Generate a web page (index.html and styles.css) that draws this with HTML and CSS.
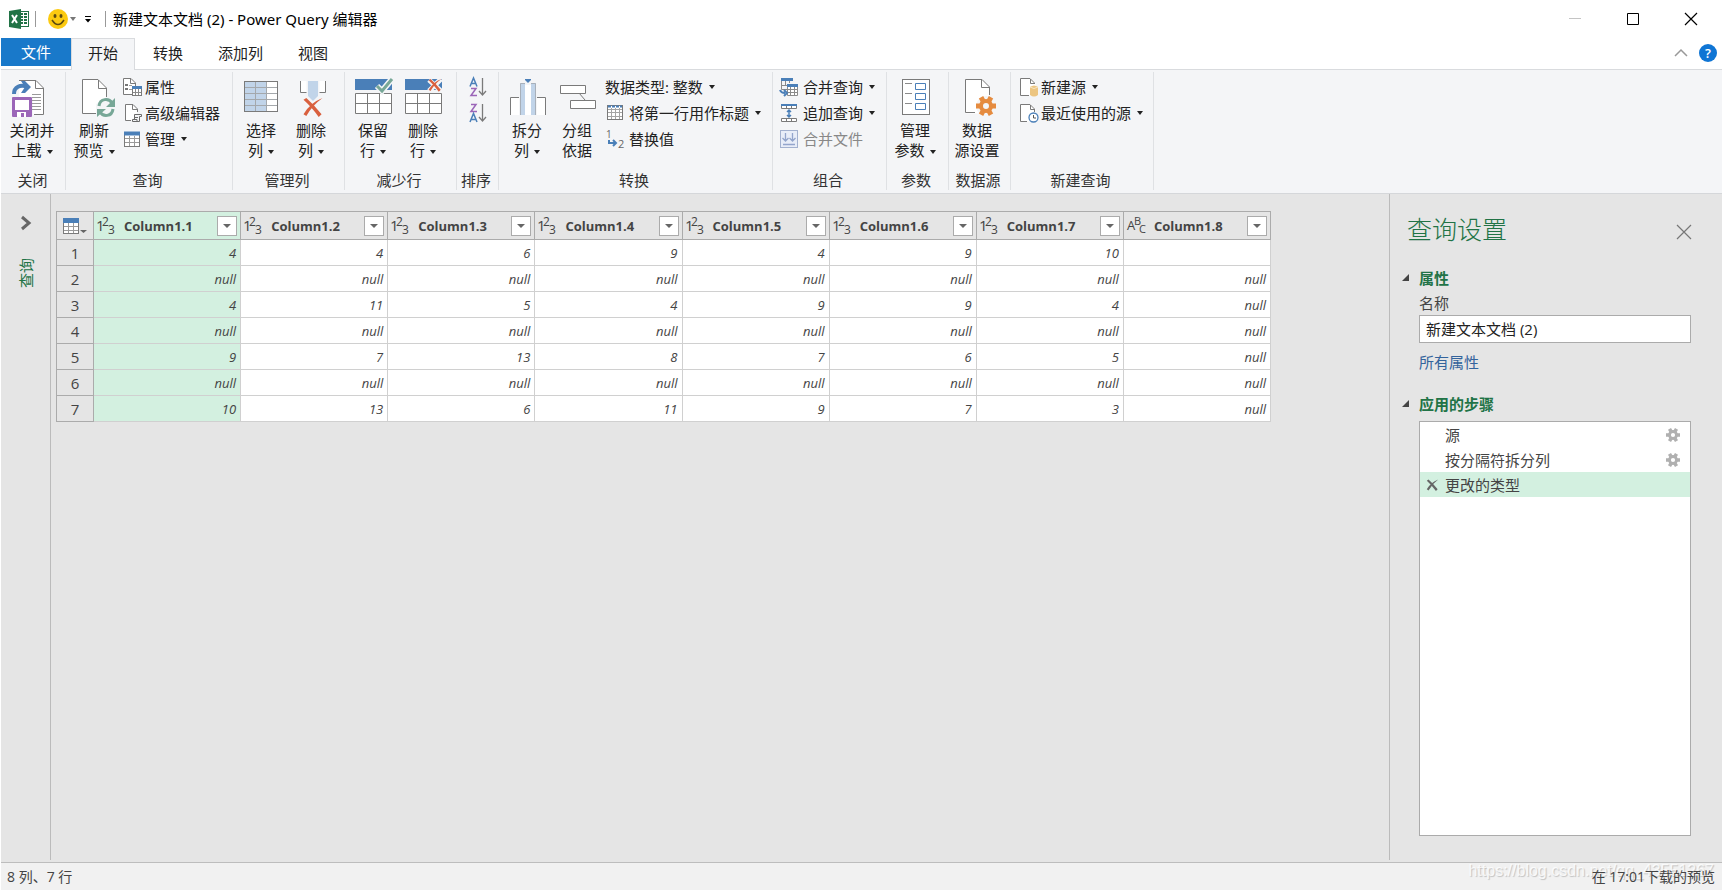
FILE: index.html
```html
<!DOCTYPE html>
<html lang="zh-CN">
<head>
<meta charset="utf-8">
<title>新建文本文档 (2) - Power Query 编辑器</title>
<link rel="stylesheet" href="styles.css">
</head>
<body>
<svg class="defs" aria-hidden="true">
  <symbol id="gear" viewBox="0 0 20 20">
    <circle cx="10" cy="10" r="5" fill="none" stroke="currentColor" stroke-width="4"/>
    <g fill="currentColor">
      <rect x="7.500" y="0" width="5" height="5" transform="rotate(30 10 10)"/>
      <rect x="7.500" y="0" width="5" height="5" transform="rotate(90 10 10)"/>
      <rect x="7.500" y="0" width="5" height="5" transform="rotate(150 10 10)"/>
      <rect x="7.500" y="0" width="5" height="5" transform="rotate(210 10 10)"/>
      <rect x="7.500" y="0" width="5" height="5" transform="rotate(270 10 10)"/>
      <rect x="7.500" y="0" width="5" height="5" transform="rotate(330 10 10)"/>
    </g>
  </symbol>
  <symbol id="cross" viewBox="0 0 22 21">
    <path d="M1 3L4 1Q12 8 20 18L17 21Q9 10 1 3Z"/>
    <path d="M21 1Q10 9 4 20L1 18Q8 6 21 1Z"/>
  </symbol>
  <symbol id="type-number" viewBox="0 0 20 20">
    <text x="-1" y="15" font-size="15">1</text>
    <text x="5" y="10" font-size="12">2</text>
    <text x="11" y="18" font-size="12">3</text>
  </symbol>
  <symbol id="type-text" viewBox="0 0 20 20">
    <text x="0" y="14" font-size="13">A</text>
    <text x="7" y="9" font-size="11">B</text>
    <text x="12" y="17" font-size="11">C</text>
  </symbol>
</svg>

<div class="app">
  <header class="titlebar">
    <svg class="excel" width="20" height="20" viewBox="0 0 20 20" aria-hidden="true">
      <rect x="10" y="2.500" width="9.500" height="15" fill="#fff" stroke="#217346"/>
      <path d="M12 5H14M15 5H18M12 8H14M15 8H18M12 11H14M15 11H18M12 14H14M15 14H18" stroke="#217346" stroke-width="2"/>
      <path d="M0 2L12 0V20L0 18Z" fill="#217346"/>
      <path d="M3 6L8 14M8 6L3 14" stroke="#fff" stroke-width="2"/>
    </svg>
    <span class="rule"></span>
    <button class="plain smile" aria-label="反馈">
      <svg width="20" height="20" viewBox="0 0 20 20"><circle cx="10" cy="10" r="10" fill="#fcca10"/><ellipse cx="7" cy="7" rx="1.500" ry="2" fill="#5c4a10"/><ellipse cx="13" cy="7" rx="1.500" ry="2" fill="#5c4a10"/><path d="M4 11Q10 20 16 11" fill="none" stroke="#5c4a10" stroke-width="1.500"/></svg>
      <span class="caret dim"></span>
    </button>
    <button class="plain qat" aria-label="自定义快速访问工具栏">
      <svg width="8" height="8" viewBox="0 0 8 8"><path d="M1 .5H7" stroke="#000"/><path d="M1 3H7L4 6.500Z"/></svg>
    </button>
    <span class="rule"></span>
    <h1>新建文本文档 (2) - Power Query 编辑器</h1>
    <div class="window-buttons">
      <button class="plain" aria-label="最小化"><svg width="14" height="14"><path d="M1 6.500H13" stroke="#c4c4c4"/></svg></button>
      <button class="plain" aria-label="最大化"><svg width="14" height="14"><path d="M1.500 1.500H12.500V12.500H1.500Z" fill="none" stroke="#000"/></svg></button>
      <button class="plain" aria-label="关闭"><svg width="14" height="14"><path d="M1 1L13 13M13 1L1 13" stroke="#000" stroke-width="1.200"/></svg></button>
    </div>
  </header>

  <nav class="tabs">
    <button class="tab file">文件</button>
    <button class="tab active">开始</button>
    <button class="tab">转换</button>
    <button class="tab">添加列</button>
    <button class="tab">视图</button>
    <div class="tab-tools">
      <button class="plain" aria-label="折叠功能区"><svg width="14" height="8" viewBox="0 0 14 8"><path d="M1 7L7 1L13 7" fill="none" stroke="#999" stroke-width="1.500"/></svg></button>
      <button class="help" aria-label="帮助">?</button>
    </div>
  </nav>

  <section class="ribbon" aria-label="功能区">
    <div class="group g-close">
      <div class="items">
        <button class="big">
          <svg width="40" height="40" viewBox="0 0 40 40"><path d="M7 2.500H24L31.500 10V36.500H21V20H7Z" fill="#fff"/><path d="M7 2.500H24L31.500 10V36.500H22M23.500 2.500V10.500H31" fill="none" stroke="#7a7a7a"/><path d="M20 16.500H29M20 19.500H29M20 22.500H29M20 25.500H29M20 28.500H29M20 31.500H29" stroke="#9a9a9a"/><path d="M2 16C2 9 8 6 16 9" fill="none" stroke="#4a7fb8" stroke-width="4"/><path d="M9 3H13L19 9L13 15H9L13 9Z" fill="#4a7fb8"/><rect y="19" width="20" height="20" rx="1" fill="#9b66b8"/><rect x="3" y="22" width="14" height="10" fill="#fff"/><rect x="5" y="34" width="9" height="5" fill="#fff"/><rect x="9" y="35" width="3" height="4" fill="#9b66b8"/></svg>
          <span>关闭并</span><span>上载<i class="caret"></i></span>
        </button>
      </div>
      <h2>关闭</h2>
    </div>

    <div class="group g-query">
      <div class="items">
        <button class="big wide">
          <svg width="40" height="40" viewBox="0 0 40 40"><path d="M8.500 1.500H24L32.500 10V19L22 26V35.500H8.500Z" fill="#fff"/><path d="M22 35.500H8.500V1.500H24L32.500 10V19M24.500 2V10.500H32" fill="none" stroke="#7a7a7a"/><g fill="none" stroke="#77a797" stroke-width="3"><path d="M25 28C26 20 35 20 38 25"/><path d="M39 31C38 39 29 39 26 34"/></g><path d="M41 20V29H32ZM23 39V31H32Z" fill="#77a797"/></svg>
          <span>刷新</span><span>预览<i class="caret"></i></span>
        </button>
        <div class="rows">
          <button class="small"><svg width="20" height="20" viewBox="0 0 20 20"><path d="M.5 1.500H8L12.500 6V17.500H.5Z" fill="#fff" stroke="#7a7a7a"/><path d="M7.500 2V6.500H12" fill="none" stroke="#7a7a7a"/><path d="M2 8H5M2 12H5" stroke="#777" stroke-width="2"/><path d="M6 8.500H9M6 12.500H9" stroke="#999"/><rect x="9.500" y="10.500" width="9" height="8" fill="#fff" stroke="#7a7a7a"/><path d="M9 10.500H19" stroke="#4a7fb8" stroke-width="3"/><path d="M10 15.500H18M12.500 12V18M15.500 12V18" stroke="#8a8a8a"/></svg>属性</button>
          <button class="small"><svg width="20" height="20" viewBox="0 0 20 20"><path d="M3 2H9L14 7V10L9 17H3Z" fill="#fff"/><path d="M8 17.500H2.500V1.500H10L14.500 6V9M9.500 2V6.500H14" fill="none" stroke="#7a7a7a"/><path d="M11.500 16V11.500H18.500V13.500H16.500V18.500H9.500V16.500H14V18" fill="#f4f5f7" stroke="#6a6a6a"/><path d="M12 14.500H15" stroke="#6a6a6a"/></svg>高级编辑器</button>
          <button class="small"><svg width="20" height="20" viewBox="0 0 20 20"><rect x="1.500" y="3.500" width="15" height="14" fill="#fff" stroke="#7a7a7a"/><path d="M1 4.500H17" stroke="#4a7fb8" stroke-width="4"/><path d="M2 9.500H16M2 13.500H16M6.500 7V17M11.500 7V17" stroke="#9a9a9a"/></svg>管理<i class="caret"></i></button>
        </div>
      </div>
      <h2>查询</h2>
    </div>

    <div class="group g-columns">
      <div class="items">
        <button class="big">
          <svg width="40" height="40" viewBox="0 0 40 40"><rect x="3.500" y="3.500" width="33" height="30" fill="#fff"/><rect x="4" y="4" width="22" height="29" fill="#c1d4e9"/><path d="M4 9.500H36M4 15.500H36M4 21.500H36M4 27.500H36M14.500 4V33M25.500 4V33" stroke="#a4a8ac"/><rect x="3.500" y="3.500" width="33" height="30" fill="none" stroke="#7a7a7a"/></svg>
          <span>选择</span><span>列<i class="caret"></i></span>
        </button>
        <button class="big">
          <svg width="40" height="40" viewBox="0 0 40 40"><path d="M9.500 3V14.500H15.500V3M28.500 3V14.500H34.500V3" fill="#fff"/><path d="M9.500 3V14.500H15.500M28.500 14.500H34.500V3" fill="none" stroke="#7a7a7a"/><path d="M17 3H27V18L22 23L17 18Z" fill="#c1d4e9"/><use href="#cross" x="11" y="19" width="22" height="20" fill="#d9603f"/></svg>
          <span>删除</span><span>列<i class="caret"></i></span>
        </button>
      </div>
      <h2>管理列</h2>
    </div>

    <div class="group g-rows">
      <div class="items">
        <button class="big">
          <svg width="40" height="40" viewBox="0 0 40 40"><rect x="2" y="1" width="37" height="11" fill="#4a7fb8"/><path d="M2.500 15.500H38.500V35.500H2.500ZM14.500 15V35M26.500 15V35M2 25.500H38" fill="#fff" stroke="#7a7a7a"/><path d="M24 8L29 13L39 1" fill="none" stroke="#f4f5f7" stroke-width="6"/><path d="M24 8L29 13L39 1" fill="none" stroke="#77a797" stroke-width="3"/></svg>
          <span>保留</span><span>行<i class="caret"></i></span>
        </button>
        <button class="big">
          <svg width="40" height="40" viewBox="0 0 40 40"><rect x="2" y="1" width="37" height="11" fill="#4a7fb8"/><path d="M2.500 15.500H38.500V35.500H2.500ZM14.500 15V35M26.500 15V35M2 25.500H38" fill="#fff" stroke="#7a7a7a"/><path d="M26 2L38 13M38 1L26 13" stroke="#f4f5f7" stroke-width="5"/><use href="#cross" x="25" y="0" width="14" height="14" fill="#d9603f"/></svg>
          <span>删除</span><span>行<i class="caret"></i></span>
        </button>
      </div>
      <h2>减少行</h2>
    </div>

    <div class="group g-sort">
      <div class="items sort">
        <button class="plain" aria-label="升序排序"><svg width="18" height="20" viewBox="0 0 18 20"><path d="M1 9.500L4.500 1L8 9.500M2 6.500H7" fill="none" stroke="#4a7fb8" stroke-width="1.500"/><path d="M2 11.500H7L2 18.500H8" fill="none" stroke="#9b66b8" stroke-width="1.500"/><path d="M13.500 1V18M10 14L13.500 18L17 14" fill="none" stroke="#7a7a7a" stroke-width="1.300"/></svg></button>
        <button class="plain" aria-label="降序排序"><svg width="18" height="20" viewBox="0 0 18 20"><path d="M2 1.500H7L2 8.500H8" fill="none" stroke="#9b66b8" stroke-width="1.500"/><path d="M1 19L4.500 10.500L8 19M2 16.500H7" fill="none" stroke="#4a7fb8" stroke-width="1.500"/><path d="M13.500 1V18M10 14L13.500 18L17 14" fill="none" stroke="#7a7a7a" stroke-width="1.300"/></svg></button>
      </div>
      <h2>排序</h2>
    </div>

    <div class="group g-transform">
      <div class="items">
        <button class="big">
          <svg width="40" height="40" viewBox="0 0 40 40"><path d="M3.500 37V19.500H12V37M30 37V19.500H38.500V37" fill="#fff"/><path d="M3.500 37V19.500H12M30 19.500H38.500V37" fill="none" stroke="#7a7a7a"/><path d="M18 7H24V37H18Z" fill="#fff"/><path d="M13 5H18V37H13ZM24 5H29V37H24Z" fill="#c1d4e9"/><path d="M13.500 37V5.500H18M24 5.500H28.500V37" fill="none" stroke="#a8b0ba"/><path d="M18 1H24V2L21 5L18 2Z" fill="#4a7fb8"/></svg>
          <span>拆分</span><span>列<i class="caret"></i></span>
        </button>
        <button class="big">
          <svg width="40" height="40" viewBox="0 0 40 40"><path d="M22 15L28 22" stroke="#7a7a7a"/><path d="M3.500 7.500H28.500V15.500H3.500ZM13.500 22.500H38.500V30.500H13.500Z" fill="#fff" stroke="#7a7a7a"/></svg>
          <span>分组</span><span>依据</span>
        </button>
        <div class="rows">
          <button class="small">数据类型: 整数<i class="caret"></i></button>
          <button class="small"><svg width="20" height="20" viewBox="0 0 20 20"><rect x="2.500" y="2.500" width="15" height="14" fill="#fff"/><path d="M2 6.500H18M2 9.500H18M2 13.500H18M6.500 5V17M10.500 5V17M14.500 5V17" stroke="#a4a4a4"/><rect x="2.500" y="2.500" width="15" height="14" fill="none" stroke="#7a7a7a"/><path d="M3 3.500H17" stroke="#4a7fb8" stroke-width="2" stroke-dasharray="3 1"/></svg>将第一行用作标题<i class="caret"></i></button>
          <button class="small"><svg width="20" height="20" viewBox="0 0 20 20"><text x="1" y="9" font-size="10" fill="#666">1</text><text x="13" y="19" font-size="11" fill="#666">2</text><path d="M4 11V14H10M8 11L11 14L8 17" fill="none" stroke="#4a7fb8" stroke-width="2"/></svg>替换值</button>
        </div>
      </div>
      <h2>转换</h2>
    </div>

    <div class="group g-combine">
      <div class="items">
        <div class="rows">
          <button class="small"><svg width="20" height="20" viewBox="0 0 20 20"><path d="M2.500 4V12.500H8M6.500 4V8M2 8.500H8M10.500 4V6" fill="none" stroke="#8a8a8a"/><path d="M2 1H14V4H2ZM8 7H19V10H8Z" fill="#4a7fb8"/><path d="M8.500 10V18.500H18.500V10M9 12.500H18M9 15.500H18M11.500 10V18M15.500 10V18" fill="#fff" stroke="#8a8a8a"/><path d="M1 13Q2 16 6 16M5 13L8 16L5 19" fill="none" stroke="#4a7fb8" stroke-width="2"/></svg>合并查询<i class="caret"></i></button>
          <button class="small"><svg width="20" height="20" viewBox="0 0 20 20"><path d="M2.500 3V5.500H17.500V3M7.500 3V5M12.500 3V5M2.500 15.500H17.500V18.500H2.500ZM7.500 15V18M12.500 15V18" fill="#fff" stroke="#7a7a7a"/><rect x="2" y="1" width="16" height="2" fill="#4a7fb8"/><path d="M10 7V14M8 9L10 7L12 9M8 12L10 14L12 12" fill="none" stroke="#4a7fb8" stroke-width="1.500"/></svg>追加查询<i class="caret"></i></button>
          <button class="small" disabled><svg width="20" height="20" viewBox="0 0 20 20"><rect x="1.500" y="1.500" width="17" height="17" fill="#e8edf8" stroke="#a3b1cf"/><path d="M6.500 4V11M3.500 9L6.500 12L9.500 9M13.500 4V11M10.500 9L13.500 12L16.500 9M4 15.500H16" fill="none" stroke="#93a5cc" stroke-width="1.300"/></svg>合并文件</button>
        </div>
      </div>
      <h2>组合</h2>
    </div>

    <div class="group g-params">
      <div class="items">
        <button class="big wide">
          <svg width="40" height="40" viewBox="0 0 40 40"><rect x="7.500" y="1.500" width="27" height="35" fill="#fff" stroke="#7a7a7a"/><path d="M10 5.500H17M10 15.500H17M10 25.500H17" stroke="#8a8a8a"/><path d="M20.500 5.500H30.500V11.500H20.500ZM20.500 15.500H30.500V21.500H20.500ZM20.500 25.500H30.500V31.500H20.500Z" fill="#fff" stroke="#4a7fb8"/></svg>
          <span>管理</span><span>参数<i class="caret"></i></span>
        </button>
      </div>
      <h2>参数</h2>
    </div>

    <div class="group g-source">
      <div class="items">
        <button class="big wide">
          <svg width="40" height="40" viewBox="0 0 40 40"><path d="M8.500 1.500H25L32.500 9V35.500H8.500Z" fill="#fff"/><path d="M18 34.500H8.500V1.500H25L32.500 9V17M24.500 2V9.500H32" fill="none" stroke="#7a7a7a"/><circle cx="29" cy="28" r="10" fill="#f4f5f7"/><g class="orange"><use href="#gear" x="19" y="18" width="20" height="20"/></g></svg>
          <span>数据</span><span>源设置</span>
        </button>
      </div>
      <h2>数据源</h2>
    </div>

    <div class="group g-new">
      <div class="items">
        <div class="rows">
          <button class="small"><svg width="20" height="20" viewBox="0 0 20 20"><path d="M1.500 1.500H12L16.500 6V18.500H1.500Z" fill="#fff"/><path d="M10 18.500H1.500V1.500H11L15.500 6V7M11.500 2V6.500H15" fill="none" stroke="#7a7a7a"/><path d="M11 10Q15 7 19 10V18Q15 21 11 18Z" fill="#ecc581"/><path d="M11 10Q15 13 19 10" fill="none" stroke="#f8e5c2"/></svg>新建源<i class="caret"></i></button>
          <button class="small"><svg width="20" height="20" viewBox="0 0 20 20"><path d="M1.500 1.500H12L16.500 6V18.500H1.500Z" fill="#fff"/><path d="M8 18.500H1.500V1.500H11L15.500 6V9M11.500 2V6.500H15" fill="none" stroke="#7a7a7a"/><circle cx="14.500" cy="14.500" r="4.500" fill="#fff" stroke="#4a7fb8" stroke-width="1.300"/><path d="M14.500 12V15H17" fill="none" stroke="#555"/></svg>最近使用的源<i class="caret"></i></button>
        </div>
      </div>
      <h2>新建查询</h2>
    </div>
  </section>

  <main class="workspace">
    <aside class="queries">
      <button class="plain" aria-label="展开"><svg width="10" height="14" viewBox="0 0 10 14"><path d="M1 1L8 7L1 13" fill="none" stroke="#666" stroke-width="3"/></svg></button>
      <span class="vertical">查询</span>
    </aside>

    <div class="grid-area">
      <table class="grid">
        <thead>
          <tr>
            <th class="corner"><button class="plain" aria-label="表选项"><svg width="24" height="16" viewBox="0 0 24 16"><rect x=".5" y="1.500" width="15" height="14" fill="#fff" stroke="#7a7a7a"/><rect y="0" width="16" height="5" fill="#4a7fb8"/><path d="M1 8.500H15M1 12.500H15M5.500 5V15M10.500 5V15" stroke="#9a9a9a"/><path d="M17 12H24L20.500 15Z" fill="#666"/></svg></button></th>
            <th class="sel"><div class="head"><svg class="type" width="20" height="20"><use href="#type-number"/></svg><span>Column1.1</span><button class="filter" aria-label="筛选 Column1.1"></button></div></th>
            <th><div class="head"><svg class="type" width="20" height="20"><use href="#type-number"/></svg><span>Column1.2</span><button class="filter" aria-label="筛选 Column1.2"></button></div></th>
            <th><div class="head"><svg class="type" width="20" height="20"><use href="#type-number"/></svg><span>Column1.3</span><button class="filter" aria-label="筛选 Column1.3"></button></div></th>
            <th><div class="head"><svg class="type" width="20" height="20"><use href="#type-number"/></svg><span>Column1.4</span><button class="filter" aria-label="筛选 Column1.4"></button></div></th>
            <th><div class="head"><svg class="type" width="20" height="20"><use href="#type-number"/></svg><span>Column1.5</span><button class="filter" aria-label="筛选 Column1.5"></button></div></th>
            <th><div class="head"><svg class="type" width="20" height="20"><use href="#type-number"/></svg><span>Column1.6</span><button class="filter" aria-label="筛选 Column1.6"></button></div></th>
            <th><div class="head"><svg class="type" width="20" height="20"><use href="#type-number"/></svg><span>Column1.7</span><button class="filter" aria-label="筛选 Column1.7"></button></div></th>
            <th><div class="head"><svg class="type" width="20" height="20"><use href="#type-text"/></svg><span>Column1.8</span><button class="filter" aria-label="筛选 Column1.8"></button></div></th>
          </tr>
        </thead>
        <tbody>
          <tr><th>1</th><td class="sel">4</td><td>4</td><td>6</td><td>9</td><td>4</td><td>9</td><td>10</td><td></td></tr>
          <tr><th>2</th><td class="sel">null</td><td>null</td><td>null</td><td>null</td><td>null</td><td>null</td><td>null</td><td>null</td></tr>
          <tr><th>3</th><td class="sel">4</td><td>11</td><td>5</td><td>4</td><td>9</td><td>9</td><td>4</td><td>null</td></tr>
          <tr><th>4</th><td class="sel">null</td><td>null</td><td>null</td><td>null</td><td>null</td><td>null</td><td>null</td><td>null</td></tr>
          <tr><th>5</th><td class="sel">9</td><td>7</td><td>13</td><td>8</td><td>7</td><td>6</td><td>5</td><td>null</td></tr>
          <tr><th>6</th><td class="sel">null</td><td>null</td><td>null</td><td>null</td><td>null</td><td>null</td><td>null</td><td>null</td></tr>
          <tr><th>7</th><td class="sel">10</td><td>13</td><td>6</td><td>11</td><td>9</td><td>7</td><td>3</td><td>null</td></tr>
        </tbody>
      </table>
    </div>

    <aside class="settings">
      <div class="settings-head">
        <h2>查询设置</h2>
        <button class="plain" aria-label="关闭查询设置"><svg width="14" height="14"><path d="M0 0L14 14M14 0L0 14" stroke="#777" stroke-width="1.200"/></svg></button>
      </div>
      <h3><svg width="8" height="8"><path d="M0 7H7V0Z" fill="#444"/></svg>属性</h3>
      <label for="query-name">名称</label>
      <input id="query-name" type="text" value="新建文本文档 (2)">
      <a href="#">所有属性</a>
      <h3 class="steps-title"><svg width="8" height="8"><path d="M0 7H7V0Z" fill="#444"/></svg>应用的步骤</h3>
      <ol class="steps">
        <li><span class="mark"></span><span>源</span><button class="plain" aria-label="编辑设置"><svg width="14" height="14"><use href="#gear"/></svg></button></li>
        <li><span class="mark"></span><span>按分隔符拆分列</span><button class="plain" aria-label="编辑设置"><svg width="14" height="14"><use href="#gear"/></svg></button></li>
        <li class="current"><span class="mark"><button class="plain" aria-label="删除步骤"><svg width="13" height="12" fill="#666"><use href="#cross"/></svg></button></span><span>更改的类型</span></li>
      </ol>
    </aside>
  </main>

  <footer class="status">
    <span>8 列、7 行</span>
    <span class="watermark">https://blog.csdn.net/qq_43551267</span>
    <span class="preview-time">在 17:01下载的预览</span>
  </footer>
</div>
</body>
</html>
```
FILE: styles.css
```css
* { box-sizing: border-box; }

body {
  margin: 0;
  background: #fff;
  color: #222;
  font: 15px/20px "Open Sans", "Noto Sans CJK SC", sans-serif;
}

h1, h2, h3, ol { margin: 0; padding: 0; font-weight: 400; font-size: 15px; }
button { font: inherit; color: inherit; background: none; border: 0; padding: 0; white-space: nowrap; }
svg { display: block; flex: none; overflow: visible; }
symbol { overflow: visible; }
.defs { position: absolute; width: 0; height: 0; }
.plain { display: flex; align-items: center; justify-content: center; }

.app { display: flex; flex-direction: column; min-height: 100vh; padding-left: 1px; }

.caret {
  display: inline-block;
  flex: none;
  margin-left: 5px;
  vertical-align: middle;
  border: 3px solid transparent;
  border-top: 4px solid #222;
  border-bottom: 0;
}
.caret.dim { border-top-color: #777; margin-left: 2px; }

/* Title bar */
.titlebar { display: flex; align-items: center; height: 38px; padding-left: 8px; }
.titlebar h1 { margin-left: 7px; font-family: "Noto Sans", "Noto Sans CJK SC", sans-serif; color: #000; }
.rule { width: 1px; height: 16px; background: #999; }
.excel { margin-right: 6px; }
.smile { margin-left: 12px; }
.qat { margin: 2px 13px 0 8px; }
.window-buttons { display: flex; margin-left: auto; padding-right: 2px; align-self: stretch; }
.window-buttons button { width: 58px; }

/* Tabs */
.tabs { display: flex; gap: 1px; height: 31px; }
.tab { padding: 0 17px 2px; height: 31px; color: #222; }
.tab.file { height: 28px; padding: 0 20px; margin-right: -1px; background: #1979ca; color: #fff; }
.tab.active {
  position: relative;
  height: 32px;
  padding: 0 16px 3px;
  background: #f4f5f7;
  border: 1px solid #d9dbde;
  border-bottom: 0;
}
.tab-tools { display: flex; align-items: center; gap: 11px; margin-left: auto; padding: 0 5px 2px 0; }
.help { width: 18px; height: 18px; border-radius: 50%; background: #0f75d4; color: #fff; font-size: 13px; line-height: 18px; font-weight: 600; }

/* Ribbon */
.ribbon {
  display: flex;
  padding: 2px 0 3px;
  background: #f4f5f7;
  border-top: 1px solid #d9dbde;
  border-bottom: 1px solid #d5d7da;
}
.group { display: flex; flex-direction: column; flex: none; padding-top: 2px; border-right: 1px solid #dfe1e4; }
.group h2 { padding-right: 3px; text-align: center; line-height: 20px; color: #333; }
.items { display: flex; height: 96px; }
.g-close { width: 65px; }
.g-query { width: 167px; }
.g-columns { width: 112px; }
.g-rows { width: 112px; }
.g-sort { width: 42px; }
.g-transform { width: 274px; }
.g-combine { width: 114px; }
.g-params { width: 62px; }
.g-source { width: 62px; }
.g-new { width: 143px; }
.g-close h2 { padding-right: 1px; }
.g-columns .items, .g-rows .items, .g-transform .items { padding-left: 3px; }
.g-combine .items { padding-left: 6px; }
.g-new .items { padding-left: 8px; }

.big { display: flex; flex-direction: column; align-items: center; width: 50px; padding-top: 4px; }
.big svg { margin-bottom: 2px; }
.wide { width: 56px; }
.g-query .rows { padding-left: 1px; }
.g-close .big { width: 62px; }

.rows { display: flex; flex-direction: column; align-items: flex-start; }
.small { display: flex; align-items: center; height: 26px; }
.small svg { margin-right: 2px; }
.g-transform .rows { padding-left: 3px; }
.g-transform .small svg { margin-right: 4px; }
.g-combine .small svg { margin-right: 4px; }
.small:disabled { color: #888; }
.small .caret { margin-left: 6px; }
.sort { flex-direction: column; align-items: center; gap: 6px; padding-top: 3px; }
.orange { color: #e58b3f; }

/* Workspace */
.workspace { display: flex; flex: 1; background: #e5e5e5; padding-bottom: 2px; }
.queries {
  display: flex;
  flex-direction: column;
  align-items: center;
  gap: 28px;
  width: 50px;
  padding-top: 22px;
  border-right: 1px solid #bbb;
}
.vertical { writing-mode: vertical-rl; text-orientation: sideways; transform: rotate(180deg); color: #217346; }

.grid-area { flex: 1; padding: 17px 5px; }
.grid { width: 1215px; table-layout: fixed; border-collapse: collapse; color: #444; }
.grid th, .grid td { height: 26px; padding: 0; }
.grid thead th { height: 28px; background: #e5e5e5; border: 1px solid #ababab; }
.grid thead th.sel { background: #d3f0e0; }
.grid .corner { width: 37px; }
.corner .plain { width: 100%; }
.grid tbody th { font-weight: 400; border: 1px solid #ababab; background: #e5e5e5; padding-top: 1px; }
.grid td {
  padding-right: 4px;
  background: #fff;
  border: 1px solid #d0d0d0;
  font-size: 13px;
  font-style: italic;
  text-align: right;
}
.grid td.sel { background: #d3f0e0; }
.head { display: flex; align-items: center; height: 27px; padding: 0 3px; font-size: 13px; }
.head .filter { margin-left: auto; }
.type { margin-right: 7px; font-weight: 400; fill: #444; }
.filter { display: flex; align-items: center; justify-content: center; width: 20px; height: 20px; background: #fff; border: 1px solid #ababab; }
.filter::before { content: ""; border: 4px solid transparent; border-top-color: #666; border-bottom: 0; }

/* Query settings */
.settings { display: flex; flex-direction: column; width: 333px; padding: 19px 31px 24px 12px; border-left: 1px solid #bbb; color: #444; }
.settings > * { margin-left: 17px; }
.settings .settings-head { display: flex; align-items: center; justify-content: space-between; margin-left: 5px; }
.settings-head h2 { font-size: 25px; line-height: 32px; font-weight: 300; color: #217346; }
.settings-head button { padding-top: 5px; }
.settings h3 { display: flex; align-items: center; gap: 9px; margin: 23px 0 0; font-weight: 700; color: #217346; }
.settings label { margin-top: 5px; }
.settings input {
  height: 28px;
  margin-top: 2px;
  padding: 0 6px 2px;
  border: 1px solid #ababab;
  font: inherit;
  color: #222;
  background: #fff;
}
.settings a { margin-top: 9px; color: #33639c; text-decoration: none; }
.settings .steps-title { margin-top: 22px; }
.steps { flex: 1; margin-top: 7px; list-style: none; background: #fff; border: 1px solid #ababab; }
.steps li { display: flex; align-items: center; height: 25px; padding-right: 10px; }
.steps .mark { display: flex; width: 25px; padding-left: 6px; }
.steps li > button { margin-left: auto; color: #b0b0b0; }
.steps .current { background: #d3f0e0; }

/* Status bar */
.status {
  position: relative;
  display: flex;
  align-items: center;
  justify-content: space-between;
  height: 28px;
  padding: 0 7px 0 6px;
  background: #f1f1f1;
  border-top: 1px solid #bdbdbd;
  color: #444;
  font-size: 14px;
}
.preview-time { position: relative; }
.watermark {
  position: absolute;
  right: 8px;
  top: -2px;
  font: 16px/20px "Liberation Sans", sans-serif;
  color: rgba(255, 255, 255, 0.8);
  text-shadow: 1px 1px 1px rgba(0, 0, 0, 0.2);
}
```
